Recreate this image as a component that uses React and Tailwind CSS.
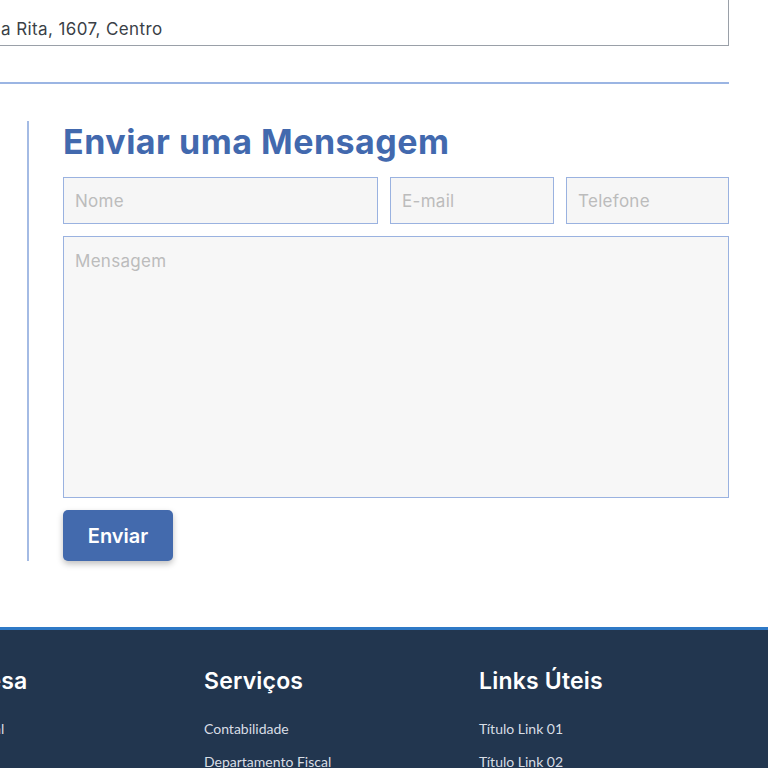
export default function App() {
  const head = { fontFamily: "Inter, 'Noto Sans', sans-serif" };
  const body = { fontFamily: "Lato, 'Open Sans', sans-serif" };
  return (
    <div className="w-[768px] h-[768px] overflow-hidden bg-white" style={head}>
      <div className="pr-[39px]">
        <div className="-mt-[20px] -ml-[2px] h-[66px] border border-[#9aa0a8] flex items-end pb-[4px]">
          <span className="pl-[2px] text-[17px] leading-[24px] text-[#3a3f47] tracking-[0.4px]">a Rita, 1607, Centro</span>
        </div>
        <div className="mt-[36px] h-[2px] bg-[#9bb5e3]" />
        <div className="mt-[37px] ml-[27px] h-[440px] border-l-2 border-[#a4bbe4] pl-[34px]">
          <h2 className="text-[34px] leading-[40px] font-bold text-[#4269ae] tracking-[0.5px] pt-[1px]">Enviar uma Mensagem</h2>
          <div className="mt-[15px] flex gap-[12px]">
            <input placeholder="Nome" className="w-[316px] h-[47px] border border-[#9ab2e0] bg-[#f6f6f6] px-[11px] text-[17px] tracking-[0.3px] placeholder:text-[#bcbcbc] outline-none" />
            <input placeholder="E-mail" className="w-[164px] h-[47px] border border-[#9ab2e0] bg-[#f6f6f6] px-[11px] text-[17px] tracking-[0.3px] placeholder:text-[#bcbcbc] outline-none" />
            <input placeholder="Telefone" className="w-[163px] h-[47px] border border-[#9ab2e0] bg-[#f6f6f6] px-[11px] text-[17px] tracking-[0.3px] placeholder:text-[#bcbcbc] outline-none" />
          </div>
          <textarea placeholder="Mensagem" className="mt-[12px] block w-[666px] h-[262px] border border-[#9ab2e0] bg-[#f7f7f7] px-[11px] py-[12px] text-[17px] tracking-[0.3px] placeholder:text-[#bcbcbc] outline-none resize-none" />
          <button className="mt-[12px] w-[110px] h-[51px] rounded-[5px] bg-[#436aad] text-white text-[20px] font-semibold shadow-[0_3px_6px_rgba(0,0,0,0.25)]">Enviar</button>
        </div>
      </div>
      <div className="mt-[66px] border-t-[3px] border-[#2f79c6] bg-[#22364f] h-[200px] pt-[35px]">
        <div className="flex -ml-[71px]">
          {[
            ["Empresa", ["Institucional", "Sobre Nós"]],
            ["Serviços", ["Contabilidade", "Departamento Fiscal"]],
            ["Links Úteis", ["Título Link 01", "Título Link 02"]],
          ].map(([t, items]) => (
            <div key={t} className="w-[275px] shrink-0">
              <h3 className="text-[23px] leading-[32px] font-semibold text-white tracking-[0.2px]">{t}</h3>
              <ul className="mt-[22px] flex flex-col gap-[13px]" style={body}>
                {items.map((i) => (
                  <li key={i} className="text-[14px] leading-[20px] text-[#d8dde5]">{i}</li>
                ))}
              </ul>
            </div>
          ))}
        </div>
      </div>
    </div>
  );
}
